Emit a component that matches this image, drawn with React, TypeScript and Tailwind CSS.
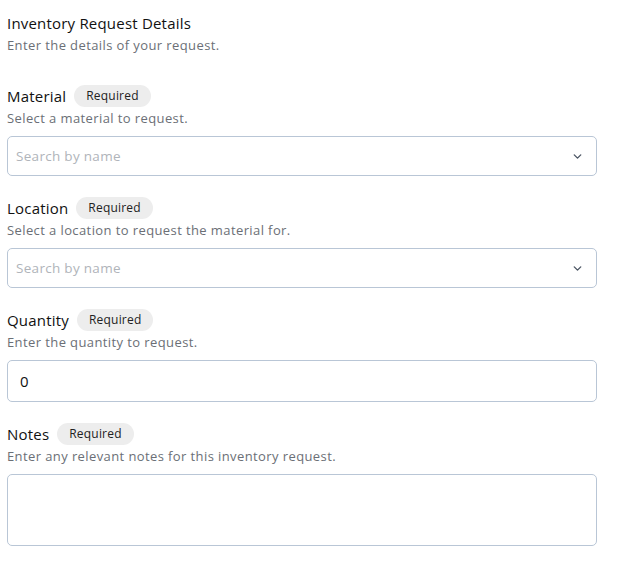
import React from "react";

function Label({ text }: { text: string }) {
  return (
    <div className="flex items-center gap-2 h-[22px]">
      <span className="text-[15px] text-[#111] tracking-[0.2px]">{text}</span>
      <span className="rounded-full bg-[#ededed] px-3 h-[22px] flex items-center text-[12px] text-[#222] tracking-[0.2px]">Required</span>
    </div>
  );
}

function Chevron() {
  return (
    <svg width="13" height="13" viewBox="0 0 24 24" fill="none" stroke="#4b5563" strokeWidth="2.5" strokeLinecap="round" strokeLinejoin="round">
      <path d="M6 9l6 6 6-6" />
    </svg>
  );
}

function Select() {
  return (
    <div className="mt-[7px] h-[40px] border border-[#b9c6d6] rounded-[5px] flex items-center justify-between pl-2 pr-[12px]">
      <span className="text-[13.5px] text-[#b0b4ba] tracking-[0.3px]">Search by name</span>
      <Chevron />
    </div>
  );
}

const desc = "text-[13px] text-[#6b6f76] leading-[22px] tracking-[0.4px]";

export default function App() {
  return (
    <div className="px-[7px] pt-[12px] w-[604px] bg-white" style={{ fontFamily: "'Open Sans', 'Noto Sans', sans-serif" }}>
      <div className="text-[15px] text-[#111] leading-[22px] tracking-[0.2px]">Inventory Request Details</div>
      <div className={desc}>Enter the details of your request.</div>

      <div className="mt-[29px]">
        <Label text="Material" />
        <div className={desc}>Select a material to request.</div>
        <Select />
      </div>

      <div className="mt-[21px]">
        <Label text="Location" />
        <div className={desc}>Select a location to request the material for.</div>
        <Select />
      </div>

      <div className="mt-[21px]">
        <Label text="Quantity" />
        <div className={desc}>Enter the quantity to request.</div>
        <div className="mt-[7px] h-[42px] border border-[#b9c6d6] rounded-[5px] flex items-center px-3">
          <span className="text-[15px] text-[#111]">0</span>
        </div>
      </div>

      <div className="mt-[21px]">
        <Label text="Notes" />
        <div className={desc}>Enter any relevant notes for this inventory request.</div>
        <div className="mt-[7px] h-[72px] border border-[#b9c6d6] rounded-[5px]" />
      </div>
    </div>
  );
}
